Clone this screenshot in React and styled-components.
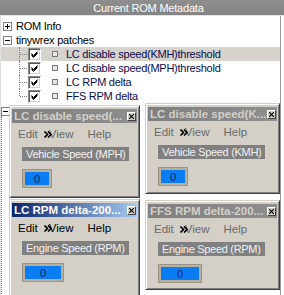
import styled, { createGlobalStyle } from 'styled-components'

const GlobalStyle = createGlobalStyle`
  html, body {
    margin: 0;
    padding: 0;
    background: #fff;
  }
  body {
    width: 284px;
    height: 295px;
    overflow: hidden;
    font-family: "Liberation Sans", Arial, sans-serif;
  }
`

const patches = [
  { label: 'LC disable speed(KMH)threshold', selected: true },
  { label: 'LC disable speed(MPH)threshold' },
  { label: 'LC RPM delta' },
  { label: 'FFS RPM delta', last: true },
]

const frames = [
  { title: 'LC disable speed(...', gauge: 'Vehicle Speed (MPH)', valueWidth: 30, width: 131, height: 93, shift: 0 },
  { title: 'LC disable speed(K...', gauge: 'Vehicle Speed (KMH)', valueWidth: 30, width: 135, height: 91, shift: -2 },
  { title: 'LC RPM delta-200...', gauge: 'Engine Speed (RPM)', valueWidth: 42, width: 131, height: 100, shift: 0, active: true },
  { title: 'FFS RPM delta-200...', gauge: 'Engine Speed (RPM)', valueWidth: 44, width: 135, height: 90, shift: 1 },
]

function Expander({ open }) {
  return (
    <ExpanderBox>
      <svg width="7" height="7" viewBox="0 0 7 7">
        <rect x="1" y="3" width="5" height="1" fill="#000" />
        {!open && <rect x="3" y="1" width="1" height="5" fill="#000" />}
      </svg>
    </ExpanderBox>
  )
}

function Check() {
  return (
    <CheckBox>
      <svg width="9" height="9" viewBox="0 0 9 9">
        <path d="M1.5 3.5 L3.5 5.5 L7.5 1.5 M1.5 4.5 L3.5 6.5 L7.5 2.5 M1.5 5.5 L3.5 7.5 L7.5 3.5" stroke="#000" strokeWidth="1" fill="none" />
      </svg>
    </CheckBox>
  )
}

function InternalFrame({ frame }) {
  return (
    <Frame $width={frame.width} $height={frame.height} $shift={frame.shift}>
      <TitleBar $active={frame.active}>
        <TitleText $active={frame.active}>{frame.title}</TitleText>
        <CloseButton>
          <svg width="5" height="5" viewBox="0 0 5 5">
            <path d="M0 0 L5 5 M5 0 L0 5" stroke="#000" strokeWidth="1.2" />
          </svg>
        </CloseButton>
      </TitleBar>
      <MenuBar $active={frame.active}>
        <MenuItem>Edit</MenuItem>
        <MenuItem $gap={6}>
          <Chevron width="8" height="7" viewBox="0 0 8 7">
            <path d="M0.5 0.5 L3.5 3.5 L0.5 6.5 M4 0.5 L7 3.5 L4 6.5" stroke="#000" strokeWidth="1.6" fill="none" />
          </Chevron>
          View
        </MenuItem>
        <MenuItem $gap={14}>Help</MenuItem>
      </MenuBar>
      <GaugeLabel>{frame.gauge}</GaugeLabel>
      <ValueBox $width={frame.valueWidth}>
        <ValueField>0</ValueField>
      </ValueBox>
    </Frame>
  )
}

export default function App() {
  return (
    <>
      <GlobalStyle />
      <Panel>
        <Header>Current ROM Metadata</Header>
        <TreeBody>
          <Row>
            <Expander />
            <NodeText>ROM Info</NodeText>
          </Row>
          <Row>
            <Expander open />
            <NodeText>tinywrex patches</NodeText>
          </Row>
          {patches.map((p) => (
            <Row key={p.label} $selected={p.selected}>
              <Connector $last={p.last} />
              <Check />
              <Bullet />
              <LeafText>{p.label}</LeafText>
            </Row>
          ))}
          <Desk>
            <DeskGutter>
              <Expander open />
              <GutterLine />
            </DeskGutter>
            <FrameGrid>
              {frames.map((f) => (
                <InternalFrame key={f.title} frame={f} />
              ))}
            </FrameGrid>
          </Desk>
        </TreeBody>
      </Panel>
    </>
  )
}

const Panel = styled.div`
  display: flex;
  flex-direction: column;
  width: 284px;
  height: 295px;
  overflow: hidden;
`

const Header = styled.div`
  height: 15px;
  flex-shrink: 0;
  display: flex;
  align-items: center;
  justify-content: center;
  padding-left: 13px;
  background: linear-gradient(#8e8e8e, #848484);
  border-bottom: 1px solid #e4e4e4;
  color: #fff;
  font-size: 11px;
  letter-spacing: -0.2px;
`

const TreeBody = styled.div`
  flex: 1;
  width: 281px;
  padding-top: 3px;
  border-right: 1px solid #9a9a9a;
  border-left: 1px solid #e0e0e0;
  box-sizing: border-box;
  overflow: hidden;
`

const Row = styled.div`
  display: flex;
  align-items: center;
  height: 14px;
  padding-left: 2px;
  background: ${({ $selected }) => ($selected ? '#d6d3cc' : 'transparent')};
`

const ExpanderBox = styled.div`
  width: 9px;
  height: 9px;
  box-sizing: border-box;
  border: 1px solid #808080;
  background: #fff;
  display: flex;
  align-items: center;
  justify-content: center;
  flex-shrink: 0;
`

const NodeText = styled.span`
  margin-left: 4px;
  font-size: 11px;
  letter-spacing: -0.25px;
  color: #000;
  white-space: nowrap;
`

const Connector = styled.div`
  align-self: stretch;
  width: 7px;
  margin-left: 16px;
  margin-right: 1px;
  position: relative;
  border-left: 1px dotted #808080;
  height: ${({ $last }) => ($last ? '7px' : 'auto')};
  &::after {
    content: '';
    position: absolute;
    left: 0;
    top: 7px;
    width: 7px;
    border-top: 1px dotted #808080;
  }
`

const CheckBox = styled.div`
  width: 13px;
  height: 13px;
  box-sizing: border-box;
  border: 1px solid;
  border-color: #8a8a8a #fff #fff #8a8a8a;
  box-shadow: inset 1px 1px 0 #5a5a5a, inset -1px -1px 0 #d4d0c8;
  background: #fff;
  display: flex;
  align-items: center;
  justify-content: center;
  flex-shrink: 0;
  align-self: center;
`

const Bullet = styled.div`
  width: 4px;
  height: 4px;
  margin-left: 11px;
  border: 1px solid #7a7a7a;
  background: #e6e6e6;
  flex-shrink: 0;
`

const LeafText = styled.span`
  margin-left: 8px;
  font-size: 11px;
  letter-spacing: -0.25px;
  color: #0c0c50;
  white-space: nowrap;
`

const Desk = styled.div`
  display: flex;
  align-items: flex-start;
`

const DeskGutter = styled.div`
  width: 8px;
  display: flex;
  flex-direction: column;
  padding-top: 4px;
  flex-shrink: 0;
`

const GutterLine = styled.div`
  width: 0;
  height: 200px;
  margin-left: 0;
  border-left: 1px dotted #808080;
`

const FrameGrid = styled.div`
  display: grid;
  grid-template-columns: 131px 135px;
  grid-template-rows: 93px auto;
  column-gap: 5px;
  row-gap: 1px;
  margin-top: 2px;
  align-items: start;
`

const Frame = styled.div`
  width: ${({ $width }) => $width}px;
  height: ${({ $height }) => $height}px;
  margin-top: ${({ $shift }) => $shift}px;
  box-sizing: border-box;
  display: flex;
  flex-direction: column;
  padding: 2px;
  background: #d4d0c8;
  border: 1px solid;
  border-color: #d4d0c8 #404040 #404040 #d4d0c8;
  box-shadow: inset 1px 1px 0 #fff, inset -1px -1px 0 #808080;
`

const TitleBar = styled.div`
  height: 14px;
  flex-shrink: 0;
  display: flex;
  align-items: center;
  justify-content: space-between;
  padding: 0 1px 0 2px;
  margin-top: 1px;
  background: ${({ $active }) =>
    $active ? 'linear-gradient(to right, #0a246a, #a6caf0)' : 'linear-gradient(to right, #808080, #8e8e8e)'};
`

const TitleText = styled.span`
  font-size: 11.5px;
  font-weight: bold;
  color: ${({ $active }) => ($active ? '#fff' : '#d4d0c8')};
  white-space: nowrap;
  overflow: hidden;
`

const CloseButton = styled.div`
  width: 9px;
  height: 9px;
  box-sizing: border-box;
  background: #d4d0c8;
  border: 1px solid;
  border-color: #fff #404040 #404040 #fff;
  display: flex;
  align-items: center;
  justify-content: center;
  flex-shrink: 0;
`

const MenuBar = styled.div`
  display: flex;
  align-items: center;
  height: 20px;
  padding-left: 6px;
  margin-top: 1px;
  font-size: 11.5px;
  color: ${({ $active }) => ($active ? '#000' : '#6a6a6a')};
`

const MenuItem = styled.span`
  display: inline-flex;
  align-items: center;
  margin-left: ${({ $gap }) => $gap || 0}px;
  white-space: nowrap;
`

const Chevron = styled.svg`
  position: relative;
  z-index: 1;
  margin-right: -3px;
  flex-shrink: 0;
`

const GaugeLabel = styled.div`
  align-self: flex-start;
  margin: 3px 0 0 10px;
  padding: 0 4px;
  height: 14px;
  line-height: 14px;
  background: #808080;
  color: #f2f2f2;
  font-size: 11px;
  letter-spacing: -0.3px;
  white-space: nowrap;
`

const ValueBox = styled.div`
  align-self: flex-start;
  width: ${({ $width }) => $width}px;
  height: 19px;
  margin: 8px 0 0 10px;
  box-sizing: border-box;
  padding: 2px;
  background: #b8b0a0;
  border: 1px solid #9a9486;
  display: flex;
`

const ValueField = styled.div`
  flex: 1;
  background: #0a7cf4;
  color: #0a2060;
  font-size: 11px;
  display: flex;
  align-items: center;
  justify-content: center;
`
